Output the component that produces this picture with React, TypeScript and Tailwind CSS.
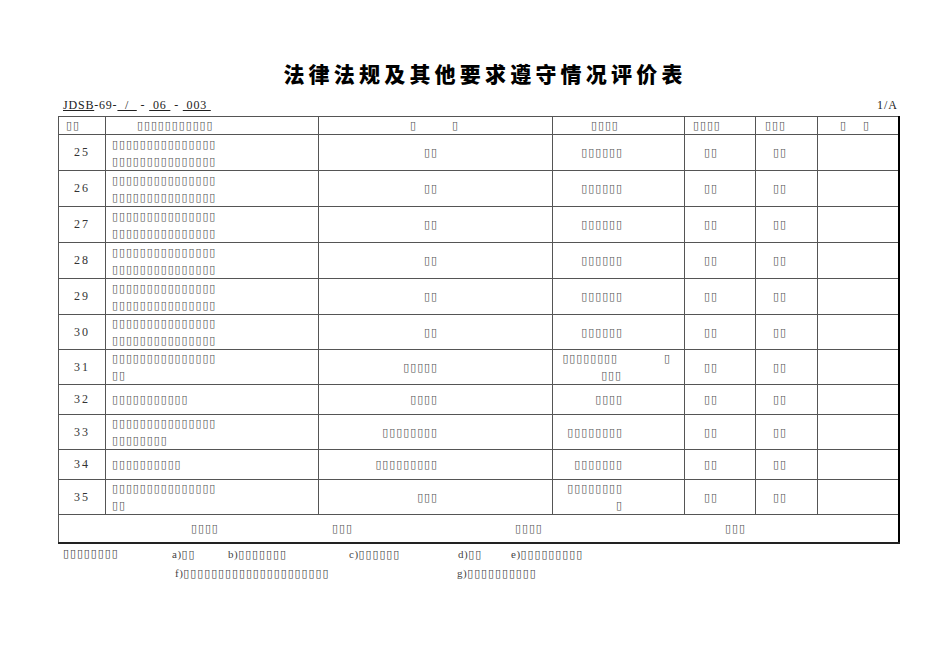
import React from "react";

// missing-glyph boxes, as in the scanned sheet
const box = (n: number) => "▯".repeat(n);

const serif = "font-['Liberation_Serif','Noto_Serif',serif]";

type Row = {
  no: string;
  item: string[];
  basis: string;
  result: string[];
};

const rows: Row[] = [
  { no: "25", item: [box(15), box(15)], basis: box(2), result: [box(6)] },
  { no: "26", item: [box(15), box(15)], basis: box(2), result: [box(6)] },
  { no: "27", item: [box(15), box(15)], basis: box(2), result: [box(6)] },
  { no: "28", item: [box(15), box(15)], basis: box(2), result: [box(6)] },
  { no: "29", item: [box(15), box(15)], basis: box(2), result: [box(6)] },
  { no: "30", item: [box(15), box(15)], basis: box(2), result: [box(6)] },
  { no: "31", item: [box(15), box(2)], basis: box(5), result: [] },
  { no: "32", item: [box(11)], basis: box(4), result: [box(4)] },
  { no: "33", item: [box(15), box(8)], basis: box(8), result: [box(8)] },
  { no: "34", item: [box(10)], basis: box(9), result: [box(7)] },
  { no: "35", item: [box(15), box(2)], basis: box(3), result: [box(8), box(1)] },
];

const heights: Record<string, string> = {
  "25": "h-[36px]",
  "26": "h-[36px]",
  "27": "h-[36px]",
  "28": "h-[36px]",
  "29": "h-[36px]",
  "30": "h-[35px]",
  "31": "h-[35px]",
  "32": "h-[30px]",
  "33": "h-[35px]",
  "34": "h-[30px]",
  "35": "h-[35px]",
};

const cell = "border border-[#555] p-0 align-middle";
const letter = `${serif} text-[11px] tracking-[0.5px]`;

export default function App() {
  return (
    <div className="relative h-[672px] w-[950px] overflow-hidden bg-white text-[#333]">
      <h1 className="pt-[59px] pl-[20px] text-center font-['Noto_Sans_CJK_SC',sans-serif] text-[21px] font-black leading-[28px] tracking-[4.2px] text-black">
        法律法规及其他要求遵守情况评价表
      </h1>

      <div className={`mt-[11px] ml-[63px] mr-[52px] flex items-end justify-between text-[12px] leading-[14px] text-[#222] ${serif}`}>
        <span className="tracking-[0.8px]">
          <span className="underline">JDSB</span>-69-
          <span className="underline">&nbsp;&nbsp;/&nbsp;&nbsp;</span>
          &nbsp;-&nbsp;
          <span className="underline">&nbsp;06&nbsp;</span>
          &nbsp;-&nbsp;
          <span className="underline">&nbsp;003&nbsp;</span>
        </span>
        <span className="tracking-[1px]">1/A</span>
      </div>

      <table className="ml-[58px] mt-[4px] w-[840px] table-fixed border-collapse border-r-2 border-r-black font-['DejaVu_Sans',sans-serif] text-[11px] leading-[17px] tracking-[0.9px] text-[#555]">
        <colgroup>
          <col className="w-[47px]" />
          <col className="w-[213px]" />
          <col className="w-[234px]" />
          <col className="w-[132px]" />
          <col className="w-[71px]" />
          <col className="w-[62px]" />
          <col className="w-[81px]" />
        </colgroup>
        <thead>
          <tr className="h-[18px]">
            <th className={`${cell} pl-[7px] text-left font-normal`}>{box(2)}</th>
            <th className={`${cell} pl-[31px] text-left font-normal`}>{box(11)}</th>
            <th className={`${cell} pl-[91px] text-left font-normal`}>{box(1)}<span className="inline-block w-[35px]" />{box(1)}</th>
            <th className={`${cell} pl-[38px] text-left font-normal`}>{box(4)}</th>
            <th className={`${cell} pl-[8px] text-left font-normal`}>{box(4)}</th>
            <th className={`${cell} pl-[9px] text-left font-normal`}>{box(3)}</th>
            <th className={`${cell} pl-[22px] text-left font-normal`}>{box(1)}<span className="inline-block w-[16px]" />{box(1)}</th>
          </tr>
        </thead>
        <tbody>
          {rows.map((r) => (
            <tr key={r.no} className={heights[r.no]}>
              <td className={`${cell} text-center ${serif} text-[12px] tracking-[2px] text-[#333]`}>{r.no}</td>
              <td className={`${cell} pl-[6px]`}>
                {r.item.map((l, i) => (
                  <div key={i}>{l}</div>
                ))}
              </td>
              <td className={`${cell} pr-[114px] text-right`}>{r.basis}</td>
              {r.no === "31" ? (
                <td className={`${cell} pr-[13px] text-right`}>
                  <div>
                    {box(8)}
                    <span className="inline-block w-[46px]" />
                    {box(1)}
                  </div>
                  <div className="pr-[49px]">{box(3)}</div>
                </td>
              ) : (
                <td className={`${cell} pr-[61px] text-right`}>
                  {r.result.map((l, i) => (
                    <div key={i}>{l}</div>
                  ))}
                </td>
              )}
              <td className={`${cell} pl-[19px]`}>{box(2)}</td>
              <td className={`${cell} pl-[17px]`}>{box(2)}</td>
              <td className={cell} />
            </tr>
          ))}
          <tr className="h-[28px]">
            <td colSpan={7} className={`${cell} border-b-2 border-b-[#222]`}>
              <div className="flex">
                <span className="ml-[132px] w-[141px]">{box(4)}</span>
                <span className="w-[183px]">{box(3)}</span>
                <span className="w-[210px]">{box(4)}</span>
                <span>{box(3)}</span>
              </div>
            </td>
          </tr>
        </tbody>
      </table>

      <div className="mt-[1px] font-['DejaVu_Sans',sans-serif] text-[11px] leading-[18px] tracking-[0.9px] text-[#444]">
        <div className="flex">
          <span className="ml-[63px] w-[109px]">{box(8)}</span>
          <span className="w-[56px]"><span className={letter}>a)</span>{box(2)}</span>
          <span className="w-[121px]"><span className={letter}>b)</span>{box(7)}</span>
          <span className="w-[109px]"><span className={letter}>c)</span>{box(6)}</span>
          <span className="w-[53px]"><span className={letter}>d)</span>{box(2)}</span>
          <span><span className={letter}>e)</span>{box(9)}</span>
        </div>
        <div className="flex">
          <span className="ml-[175px] w-[282px]"><span className={letter}>f)</span>{box(21)}</span>
          <span><span className={letter}>g)</span>{box(10)}</span>
        </div>
      </div>
    </div>
  );
}
